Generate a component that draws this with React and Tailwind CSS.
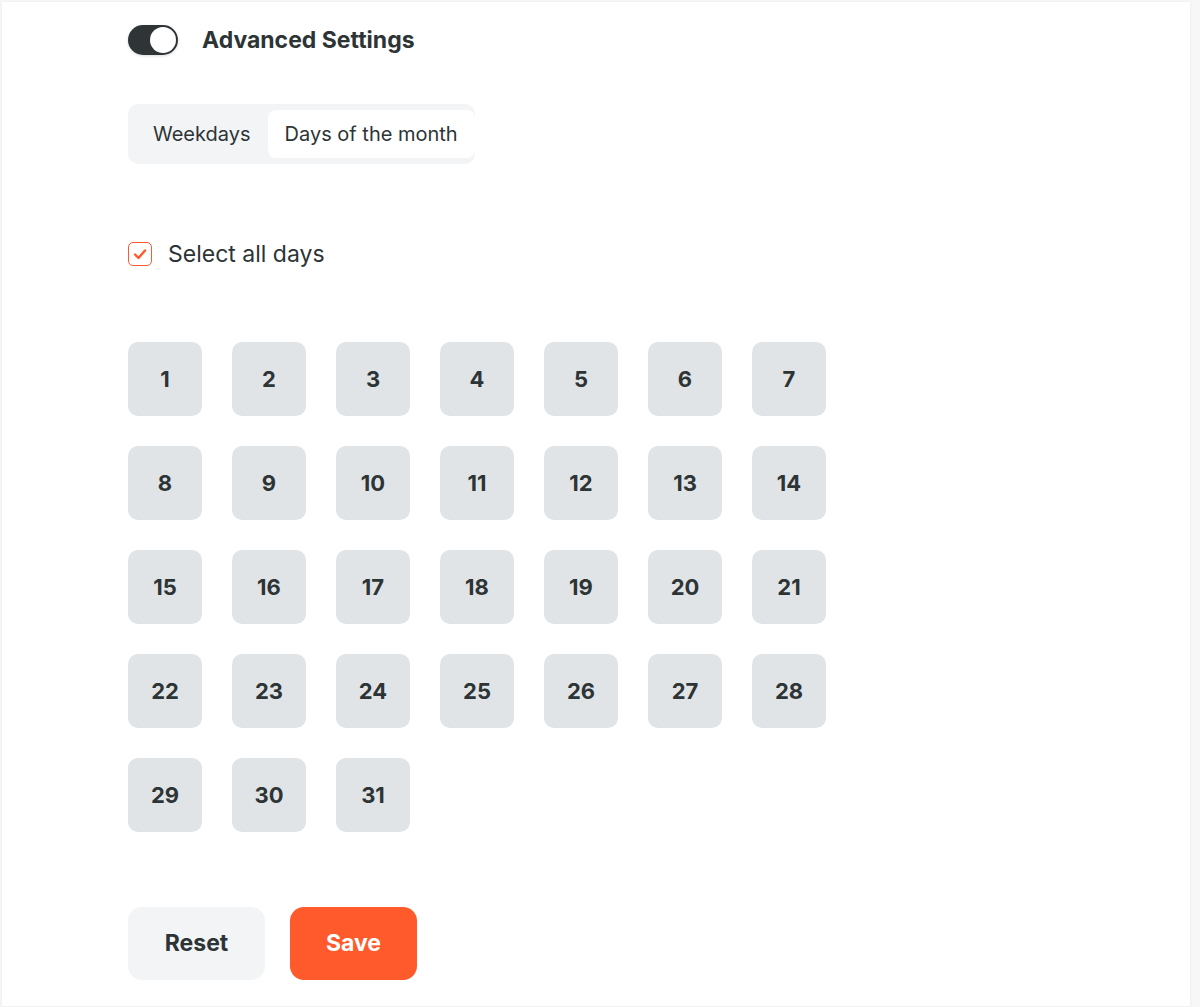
import React, { useState } from "react";

const days = Array.from({ length: 31 }, (_, i) => i + 1);

const App = () => {
	const [tab, setTab] = useState("month");
	const [allDays, setAllDays] = useState(true);

	return (
		<div className="w-full min-h-screen bg-[#f7f7f7] pl-[2px] pt-[2px] font-['Inter','Noto_Sans',sans-serif] text-[#2d3436]">
			<div className="w-[1188px] min-h-[1002px] bg-white shadow-[0_0_3px_rgba(0,0,0,0.06)] pl-[126px] pt-[22px]">
				{/* toggle */}
				<div className="flex items-center gap-[24px] h-[31px]">
					<button className="w-[50px] h-[30px] rounded-full bg-[#2f3537] p-[2px] flex justify-end shadow-[0_1px_3px_rgba(0,0,0,0.15)]">
						<span className="block w-[26px] h-[26px] rounded-full bg-white" />
					</button>
					<h2 className="text-[23px] leading-[31px] font-bold pt-[1px]">Advanced Settings</h2>
				</div>

				{/* tabs */}
				<div className="mt-[49px] inline-flex items-center h-[60px] pl-[6px] py-[6px] rounded-[10px] bg-[#f3f4f6]">
					<button
						onClick={() => setTab("week")}
						className={`h-[48px] pl-[19px] pr-[17px] rounded-[8px] text-[20px] ${tab === "week" ? "bg-white" : ""}`}
					>
						Weekdays
					</button>
					<button
						onClick={() => setTab("month")}
						className={`h-[48px] px-[17px] rounded-[8px] text-[20px] ${tab === "month" ? "bg-white" : ""}`}
					>
						Days of the month
					</button>
				</div>

				{/* select all */}
				<label className="mt-[73px] flex items-center gap-[16px] cursor-pointer w-max h-[34px]">
					<span
						onClick={() => setAllDays(!allDays)}
						className="w-[24px] h-[24px] rounded-[5px] border-[1.5px] border-[#ff5a2b] flex items-center justify-center"
					>
						{allDays && (
							<svg width="16" height="16" viewBox="0 0 16 16" fill="none">
								<path d="M3 8.5 L6.5 12 L13 4.5" stroke="#ff5a2b" strokeWidth="2.4" strokeLinecap="round" strokeLinejoin="round" />
							</svg>
						)}
					</span>
					<span className="text-[23px] leading-[34px]">Select all days</span>
				</label>

				{/* days grid */}
				<div className="mt-[71px] grid grid-cols-[repeat(7,74px)] gap-[30px]">
					{days.map((d) => (
						<button
							key={d}
							className="w-[74px] h-[74px] rounded-[10px] bg-[#e1e4e7] text-[22px] font-bold flex items-center justify-center"
						>
							{d}
						</button>
					))}
				</div>

				{/* actions */}
				<div className="mt-[75px] flex gap-[25px] pb-[26px]">
					<button className="w-[137px] h-[73px] rounded-[14px] bg-[#f3f4f6] text-[23px] font-bold">
						Reset
					</button>
					<button className="w-[127px] h-[73px] rounded-[14px] bg-[#ff5a2b] text-white text-[23px] font-bold">
						Save
					</button>
				</div>
			</div>
		</div>
	);
};

export default App;
